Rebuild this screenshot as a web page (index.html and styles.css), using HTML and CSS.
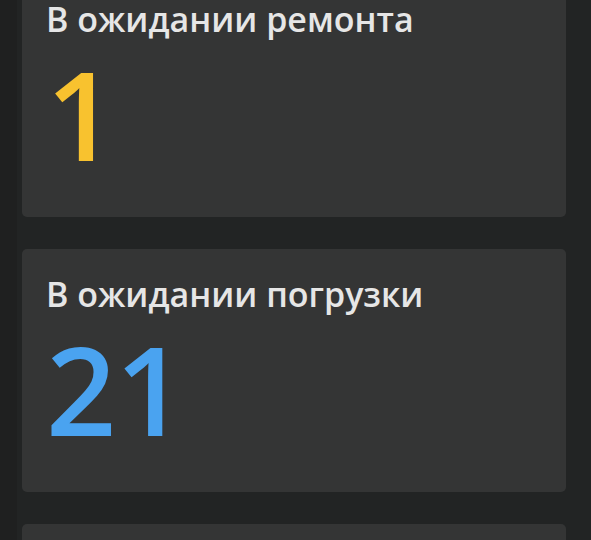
FILE: index.html
```html
<!DOCTYPE html>
<html lang="ru">
<head>
<meta charset="utf-8">
<title>Статусы</title>
<link rel="stylesheet" href="styles.css">
</head>
<body>
<div class="page">
  <div class="rail"></div>
  <main class="list">
    <section class="card">
      <h2 class="card-title">В ожидании ремонта</h2>
      <div class="card-value value-yellow">1</div>
    </section>
    <section class="card">
      <h2 class="card-title">В ожидании погрузки</h2>
      <div class="card-value value-blue">21</div>
    </section>
    <section class="card"></section>
  </main>
</div>
</body>
</html>
```
FILE: styles.css
```css
html, body {
  margin: 0;
  padding: 0;
  background: #222424;
  overflow: hidden;
}

.page {
  display: flex;
  height: 540px;
  overflow: hidden;
}

.rail {
  width: 17px;
  flex: none;
  background: #1f2020;
}

.list {
  flex: 1;
  display: flex;
  flex-direction: column;
  gap: 32px;
  padding: 0 25px 0 5px;
  margin-top: -26px;
}

.card {
  flex: none;
  background: #343535;
  border-radius: 5px;
  height: 243px;
  box-sizing: border-box;
  padding: 25px 24px 0;
  font-family: "Open Sans", "Noto Sans", sans-serif;
}

.card-title {
  margin: 0;
  font-size: 34px;
  line-height: 40px;
  font-weight: 600;
  color: #e6e6e6;
}

.card-value {
  margin-top: 13px;
  font-size: 123px;
  line-height: 123px;
  font-weight: 600;
  letter-spacing: -1px;
}

.value-yellow { color: #f8c22f; }
.value-blue { color: #4aa3f0; }
```
